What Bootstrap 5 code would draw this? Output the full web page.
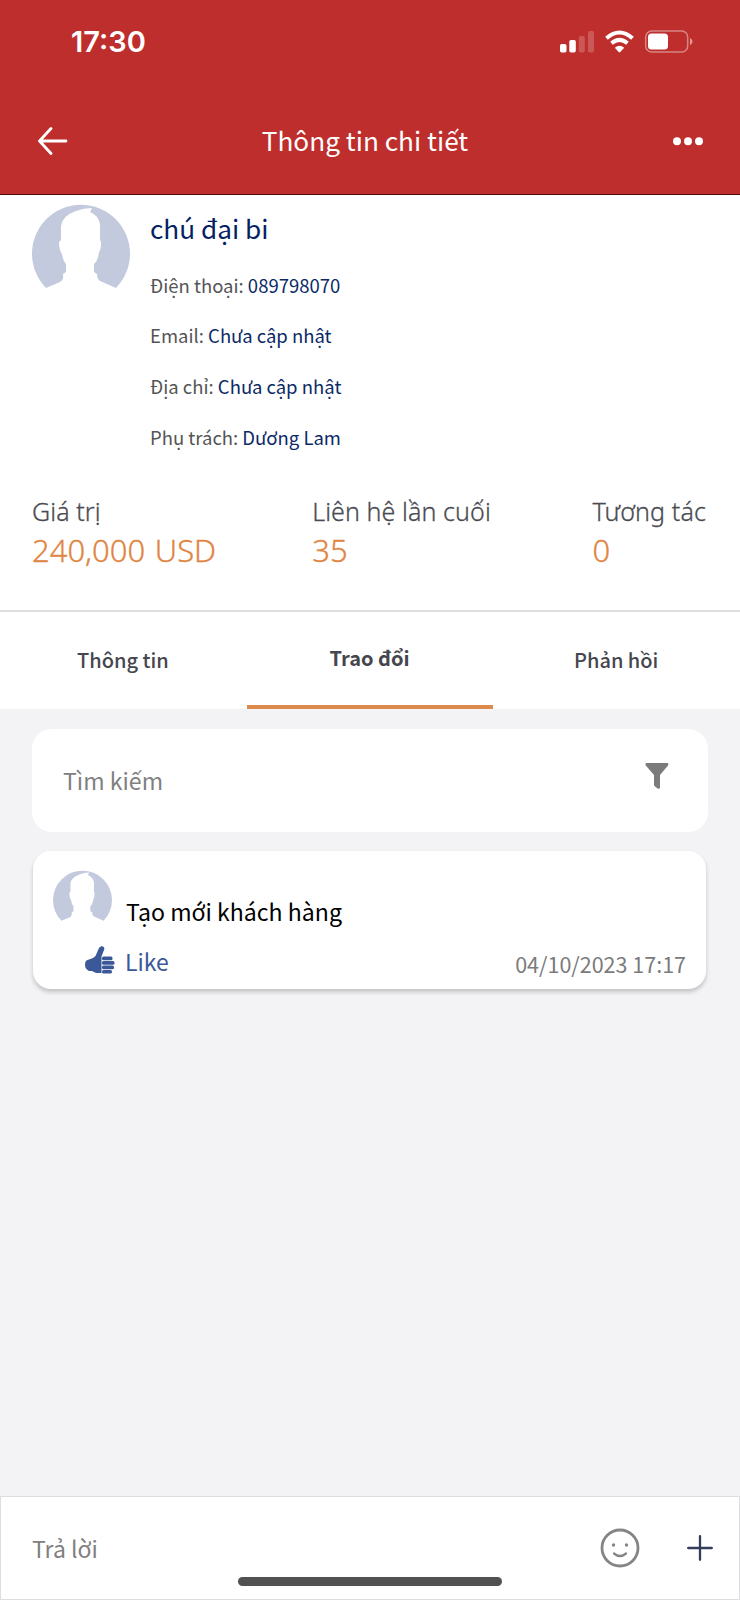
<!DOCTYPE html>
<html lang="vi">
<head>
<meta charset="utf-8">
<meta name="viewport" content="width=device-width, initial-scale=1">
<title>Thông tin chi tiết</title>
<link href="https://cdn.jsdelivr.net/npm/bootstrap@5.3.0/dist/css/bootstrap.min.css" rel="stylesheet">
<style>
body{font-family:"Noto Sans CJK JP","Noto Sans",sans-serif;background:#f3f3f5;height:1600px;overflow:hidden;color:#000}
svg{display:block;flex:none}
.t{white-space:nowrap}
.top-bar{background:#bd2e2c;height:195px;border-bottom:1px solid #4d0b0b;color:#fff}
.status{height:84px;padding:0 47px 0 71px}
.clock{font:600 29px/40px Inter,sans-serif}
.title-row{height:115px;padding:0 36px 0 37px}
.title{font-size:26.2px;line-height:40px;margin:-3px 0 0 -11px}
.profile{height:417px;border-bottom:2px solid #dedee0;padding:9px 32px 0}
.info{padding-top:4px;margin-left:20px}
.name{font-size:26.2px;line-height:40px;color:#061f63;margin-bottom:11.500px}
.line{font-size:18.500px;line-height:50.7px;height:50.7px;color:#555}
.line .v{color:#0b2a66}
.stats{margin-top:31px;font-family:"Noto Sans",sans-serif;font-weight:300;-webkit-text-stroke:.3px}
.stat{width:280.2px}
.stat:last-child{width:auto}
.stat-label{font-size:25px;line-height:36px;color:#4a4b52;letter-spacing:.1px}
.stat-value{font-size:31px;line-height:42px;color:#e08543;word-spacing:1.500px}
.tabs{height:97px}
.tab{font-size:20px;font-weight:500;color:#45464e;padding:0 1px 2px 0}
.tab.active{font-weight:700;border-bottom:4px solid #dd8a4f;padding-bottom:1px}
.search{height:103px;border-radius:20px;margin:20px 32px 19px;padding:0 39px 0 31px;color:#808080;font-size:23.1px}
.note{height:138px;border-radius:18px;margin:0 34px 0 33px;box-shadow:0 3px 4px rgba(0,0,0,.2);padding:19px 20px 0}
.note-text{font-size:23.1px;line-height:36px;padding-top:23px;margin-left:14px}
.note-foot{margin-top:11px}
.like{font-size:23px;line-height:36px;color:#3b5998}
.thumb{margin:-2px 10px 0 32px}
.stamp{font-size:21.5px;line-height:36px;color:#7b7b7b;padding-top:6px}
.reply{height:104px;border:1px solid #dedee0;padding:0 26px 0 31px;color:#808080;font-size:23px;position:relative}
.plus{margin-left:47px}
.home{position:absolute;left:237px;top:80px;width:264px;height:9px;border-radius:5px;background:#515151}
</style>
</head>
<body class="d-flex flex-column">
<svg width="0" height="0" class="position-absolute"><defs>
<symbol id="avatar" viewBox="0 0 98 84">
<path fill="#c4cade" d="M14 84A49 49 0 1 1 84 84L68 77Q65 75 65 70L62 68V60Q66 57 67 48Q69 46 69 38L68 36V20Q66 11 58 8L60 4Q52 4 44 7Q30 12 29 22V36L27 38Q27 46 30 50Q31 57 34 60V68L31 70Q32 76 28 78Z"/>
</symbol></defs></svg>
<header class="top-bar">
  <div class="status d-flex align-items-center justify-content-between">
    <div class="clock t">17:30</div>
    <svg width="133" height="24" viewBox="0 0 133 24" fill="#fff">
      <rect x="0" y="14" width="6.5" height="8.500" rx="1.700"/><rect x="9.300" y="10" width="6.500" height="12.500" rx="1.700"/>
      <g opacity=".2"><rect x="18.800" y="6" width="6" height="16.500" rx="1.700"/><rect x="28" y="1" width="6" height="21.500" rx="1.700"/></g>
      <g fill="none" stroke="#fff"><path stroke-width="4" d="M46.500 8.300Q59.500-3.300 72.500 8.300"/><path stroke-width="4" d="M51.500 13.300Q59.500 6.500 67.500 13.300"/></g>
      <path d="M54.800 17.700Q59.500 14 64.200 17.700L60.300 22Q59.500 22.700 58.700 22Z"/>
      <rect x="85.700" y="1" width="42" height="21" rx="6" fill="none" stroke="#fff" stroke-opacity=".42" stroke-width="1.500"/>
      <rect x="88" y="3.500" width="20" height="16" rx="3.500"/><path opacity=".5" d="M130 8Q132.500 9 132.500 11.500T130 15Z"/>
    </svg>
  </div>
  <div class="title-row d-flex align-items-center justify-content-between">
    <svg width="32" height="30" viewBox="0 0 32 30" fill="none" stroke="#fff" stroke-width="2.800" stroke-linecap="round" stroke-linejoin="round"><path d="M14 1.500L2.500 14L14 26.500M3 14H29"/></svg>
    <div class="title t">Thông tin chi tiết</div>
    <svg width="32" height="10" viewBox="0 0 32 10" fill="#fff"><circle cx="5" cy="4.300" r="4"/><circle cx="16" cy="4.300" r="4"/><circle cx="27" cy="4.300" r="4"/></svg>
  </div>
</header>
<section class="profile bg-white">
  <div class="d-flex">
    <svg width="98" height="84"><use href="#avatar"/></svg>
    <div class="info t">
      <div class="name">chú đại bi</div>
      <div class="line">Điện thoại: <span class="v">089798070</span></div>
      <div class="line">Email: <span class="v">Chưa cập nhật</span></div>
      <div class="line">Địa chỉ: <span class="v">Chưa cập nhật</span></div>
      <div class="line">Phụ trách: <span class="v">Dương Lam</span></div>
    </div>
  </div>
  <div class="stats d-flex t">
    <div class="stat"><div class="stat-label">Giá trị</div><div class="stat-value">240,000 USD</div></div>
    <div class="stat"><div class="stat-label">Liên hệ lần cuối</div><div class="stat-value">35</div></div>
    <div class="stat"><div class="stat-label">Tương tác</div><div class="stat-value">0</div></div>
  </div>
</section>
<nav class="tabs row g-0 bg-white">
  <div class="tab col d-flex align-items-center justify-content-center">Thông tin</div>
  <div class="tab active col d-flex align-items-center justify-content-center">Trao đổi</div>
  <div class="tab col d-flex align-items-center justify-content-center">Phản hồi</div>
</nav>
<div class="search bg-white d-flex align-items-center justify-content-between">
  <span>Tìm kiếm</span>
  <svg width="24" height="27" viewBox="0 0 24 27" fill="#7b7b7b" class="mb-2"><path d="M1.500 0H22.500Q24 .8 23 2.500L15 12V24.500Q14.500 26.500 12.500 25.500L9.500 23Q9 22.500 9 21.500V12L.8 2.500Q-.3.800 1.500 0Z"/></svg>
</div>
<article class="note bg-white">
  <div class="d-flex">
    <svg width="59" height="51"><use href="#avatar"/></svg>
    <div class="note-text t">Tạo mới khách hàng</div>
  </div>
  <div class="note-foot d-flex align-items-center justify-content-between">
    <div class="like d-flex align-items-center">
      <svg class="thumb" width="30" height="28" viewBox="0 0 30 28" fill="#3b5998"><path d="M16.500 27H11L7 25H4Q0 23 0 18.500Q0 14 4 13.500Q8 13 10.500 10L14 2Q15.500-.5 18 .5Q20 1.500 19 4L16.500 10.500Z"/><rect x="17" y="10.500" width="10.500" height="3.700" rx="1.500"/><rect x="17" y="15" width="12.500" height="3.700" rx="1.500"/><rect x="17" y="19.500" width="12" height="3.700" rx="1.500"/><rect x="17" y="24" width="10" height="3.400" rx="1.500"/></svg>
      <span>Like</span>
    </div>
    <div class="stamp t">04/10/2023 17:17</div>
  </div>
</article>
<footer class="reply bg-white d-flex align-items-center mt-auto">
  <span class="me-auto">Trả lời</span>
  <svg width="40" height="40" viewBox="0 0 40 40" fill="none" stroke="#858585" stroke-width="2.800" stroke-linecap="round"><circle cx="20" cy="20" r="18"/><path stroke-width="2.300" d="M14 25.500Q20 30.500 26 25.500"/><g fill="#858585" stroke="none"><circle cx="13.500" cy="17" r="1.700"/><circle cx="26.500" cy="17" r="1.700"/></g></svg>
  <svg class="plus" width="26" height="26" viewBox="0 0 26 26" stroke="#343e5c" stroke-width="2.300" stroke-linecap="round"><path d="M13 1.200V24.800M1.200 13H24.800"/></svg>
  <div class="home"></div>
</footer>
<script src="https://cdn.jsdelivr.net/npm/bootstrap@5.3.0/dist/js/bootstrap.bundle.min.js"></script>
</body>
</html>
